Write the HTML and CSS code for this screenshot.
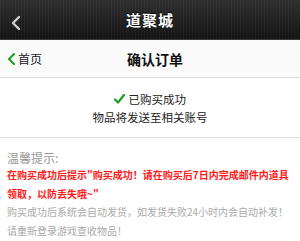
FILE: index.html
```html
<!DOCTYPE html>
<html lang="zh-CN">
<head>
<meta charset="UTF-8">
<meta name="viewport" content="width=device-width, initial-scale=1.0">
<title>道聚城 - 确认订单</title>
<link rel="stylesheet" href="styles.css">
</head>
<body>
<div class="topbar">
  <a class="topbar-back" href="#">
    <svg width="14" height="16" viewBox="0 0 14 16"><path d="M9 2 L3 8 L9 14" fill="none" stroke="#cfcfcf" stroke-width="2.4" stroke-linecap="round" stroke-linejoin="round"/></svg>
  </a>
  <h1 class="topbar-title">道聚城</h1>
</div>

<div class="subbar">
  <a class="subbar-back" href="#">
    <svg width="9" height="12" viewBox="0 0 9 12"><path d="M7 1 L2 6 L7 11" fill="none" stroke="#1f9e22" stroke-width="2" stroke-linecap="round" stroke-linejoin="round"/></svg>
    <span>首页</span>
  </a>
  <h2 class="subbar-title">确认订单</h2>
  <span></span>
</div>

<div class="result">
  <div class="result-ok">
    <svg width="11" height="10" viewBox="0 0 11 10"><path d="M1 5.5 L4 8.5 L10 1" fill="none" stroke="#1f9e22" stroke-width="2.2" stroke-linecap="round" stroke-linejoin="round"/></svg>
    已购买成功
  </div>
  <div>物品将发送至相关账号</div>
</div>

<div class="tips">
  <div class="tips-title">温馨提示:</div>
  <div class="tips-red">在购买成功后提示"购买成功！请在购买后7日内完成邮件内道具领取，以防丢失哦~"</div>
  <div class="tips-text">购买成功后系统会自动发货，如发货失败24小时内会自动补发！请重新登录游戏查收物品！</div>
</div>
</body>
</html>
```

FILE: styles.css
```css
body {
  margin: 0;
  padding: 0;
  background-color: #fff;
  font-family: "Noto Sans CJK SC", "Noto Sans", sans-serif;
  color: #222;
}

a {
  text-decoration: none;
  color: inherit;
}

.topbar {
  height: 40px;
  position: relative;
  display: flex;
  align-items: center;
  justify-content: center;
  background-color: #1c1c1c;
  background-image:
    repeating-linear-gradient(90deg, rgba(255,255,255,0.03) 0 1px, transparent 1px 3px),
    linear-gradient(#2e2e2e, #141414);
  border-bottom: 1px solid #3a3a3a;
  box-sizing: border-box;
}

.topbar-back {
  position: absolute;
  left: 10px;
  top: 12px;
}

.topbar-title {
  margin: 0;
  font-size: 15px;
  font-weight: bold;
  color: #fff;
  letter-spacing: 1px;
  text-shadow: 0 -1px 0 #000;
}

.subbar {
  height: 38px;
  display: grid;
  grid-template-columns: 1fr auto 1fr;
  align-items: center;
  background-color: #fafafa;
  border-bottom: 1px solid #dcdcdc;
  box-sizing: border-box;
}

.subbar-back {
  display: flex;
  align-items: center;
  gap: 2px;
  padding-left: 7px;
  font-size: 12px;
  color: #222;
}

.subbar-title {
  margin: 0 0 0 10px;
  font-size: 14px;
  font-weight: bold;
  color: #111;
}

.result {
  padding: 12px 0 11px;
  text-align: center;
  font-size: 11.5px;
  line-height: 18px;
  color: #222;
  border-bottom: 1px solid #e2e2e2;
}

.result-ok svg {
  margin-right: 1px;
}

.tips {
  padding: 12px 7px 0;
  font-size: 10px;
  line-height: 18.5px;
}

.tips-title {
  font-size: 12px;
  line-height: 16px;
  color: #999;
}

.tips-red {
  color: #ff1a1a;
  font-weight: bold;
}

.tips-text {
  color: #aaa;
}
```
